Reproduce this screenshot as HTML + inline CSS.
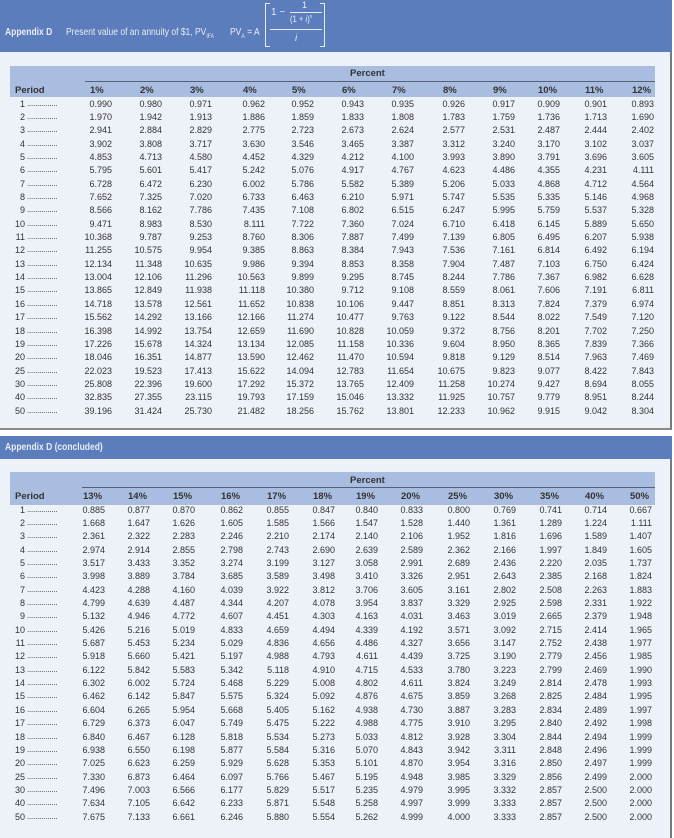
<!DOCTYPE html>
<html><head><meta charset="utf-8"><style>
*{margin:0;padding:0;box-sizing:border-box}
body{width:674px;height:838px;position:relative;background:#fff;font-family:"Liberation Sans",sans-serif;color:#333;overflow:hidden}
.abs{position:absolute}
.band{background:#5b7dbc}
.panel{background:#edf1f8;border-right:2px solid #7a7a7a}
.hb{background:#a9bde1}
table{position:absolute;left:0;border-collapse:collapse;table-layout:fixed;font-size:9px;line-height:10px}
tr{height:13.35px}
td,th{padding:0;text-align:right;white-space:nowrap;overflow:hidden;height:13.35px;vertical-align:middle}
th{font-weight:bold;font-size:9.5px;height:12px}
tr.h{height:12px}
th span{display:inline-block;width:22px;text-align:left}
th:first-child{text-align:left;padding-left:15px}
td:first-child{text-align:left}
td i{font-style:normal;display:inline-block;width:25px;text-align:right;margin-right:2px;vertical-align:top;height:10px}
.dots{font-size:8px;letter-spacing:-0.2px;vertical-align:top}
.wt{color:#e6ecf7;font-size:10px;white-space:nowrap}
</style></head><body>
<div class="abs band" style="left:0;top:0;width:672px;height:52px"></div>
<div class="abs panel" style="left:0;top:52px;width:672px;height:378px;border-bottom:2px solid #8a8a8a"></div>
<div class="abs wt" style="left:5px;top:27px;font-weight:bold;transform:scaleX(.85);transform-origin:left">Appendix D</div>
<div class="abs wt" style="left:66px;top:27px;transform:scaleX(.85);transform-origin:left">Present value of an annuity of $1, PV<sub style="font-size:6px">IFA</sub></div>
<div class="abs wt" style="left:230px;top:27px;transform:scaleX(.85);transform-origin:left">PV<sub style="font-size:6px">A</sub> = A</div>
<div class="abs" style="left:265px;top:3px;width:5px;height:44px;border:1.5px solid #e6ecf7;border-right:none"></div>
<div class="abs" style="left:320px;top:3px;width:5px;height:44px;border:1.5px solid #e6ecf7;border-left:none"></div>
<div class="abs wt" style="left:271px;top:7px">1 −</div>
<div class="abs wt" style="left:302px;top:0px;font-size:9px">1</div>
<div class="abs" style="left:290px;top:12px;width:32px;height:1px;background:#e6ecf7"></div>
<div class="abs wt" style="left:290px;top:14px;font-size:9px;transform:scaleX(.85);transform-origin:left">(1 + <i>i</i>)<sup style="font-size:5px">n</sup></div>
<div class="abs" style="left:270px;top:29px;width:52px;height:1px;background:#e6ecf7"></div>
<div class="abs wt" style="left:295px;top:33px;font-style:italic">i</div>

<div class="abs hb" style="left:10px;top:66px;width:645px;height:31px"></div>
<div class="abs" style="left:85px;top:81px;width:570px;height:1px;background:#55607a"></div>
<div class="abs" style="left:350px;top:68px;font-size:9.5px;font-weight:bold">Percent</div>

<table style="top:85px">
<colgroup><col style="width:62px"><col style="width:50px"><col style="width:50px"><col style="width:50px"><col style="width:53px"><col style="width:49px"><col style="width:50px"><col style="width:50px"><col style="width:51px"><col style="width:50px"><col style="width:45px"><col style="width:47px"><col style="width:47px"></colgroup>
<tr class="h"><th>Period</th><th><span>1%</span></th><th><span>2%</span></th><th><span>3%</span></th><th><span>4%</span></th><th><span>5%</span></th><th><span>6%</span></th><th><span>7%</span></th><th><span>8%</span></th><th><span>9%</span></th><th><span>10%</span></th><th><span>11%</span></th><th><span>12%</span></th></tr>
<tr><td><i>1</i><span class="dots">...............</span></td><td>0.990</td><td>0.980</td><td>0.971</td><td>0.962</td><td>0.952</td><td>0.943</td><td>0.935</td><td>0.926</td><td>0.917</td><td>0.909</td><td>0.901</td><td>0.893</td></tr>
<tr><td><i>2</i><span class="dots">...............</span></td><td>1.970</td><td>1.942</td><td>1.913</td><td>1.886</td><td>1.859</td><td>1.833</td><td>1.808</td><td>1.783</td><td>1.759</td><td>1.736</td><td>1.713</td><td>1.690</td></tr>
<tr><td><i>3</i><span class="dots">...............</span></td><td>2.941</td><td>2.884</td><td>2.829</td><td>2.775</td><td>2.723</td><td>2.673</td><td>2.624</td><td>2.577</td><td>2.531</td><td>2.487</td><td>2.444</td><td>2.402</td></tr>
<tr><td><i>4</i><span class="dots">...............</span></td><td>3.902</td><td>3.808</td><td>3.717</td><td>3.630</td><td>3.546</td><td>3.465</td><td>3.387</td><td>3.312</td><td>3.240</td><td>3.170</td><td>3.102</td><td>3.037</td></tr>
<tr><td><i>5</i><span class="dots">...............</span></td><td>4.853</td><td>4.713</td><td>4.580</td><td>4.452</td><td>4.329</td><td>4.212</td><td>4.100</td><td>3.993</td><td>3.890</td><td>3.791</td><td>3.696</td><td>3.605</td></tr>
<tr><td><i>6</i><span class="dots">...............</span></td><td>5.795</td><td>5.601</td><td>5.417</td><td>5.242</td><td>5.076</td><td>4.917</td><td>4.767</td><td>4.623</td><td>4.486</td><td>4.355</td><td>4.231</td><td>4.111</td></tr>
<tr><td><i>7</i><span class="dots">...............</span></td><td>6.728</td><td>6.472</td><td>6.230</td><td>6.002</td><td>5.786</td><td>5.582</td><td>5.389</td><td>5.206</td><td>5.033</td><td>4.868</td><td>4.712</td><td>4.564</td></tr>
<tr><td><i>8</i><span class="dots">...............</span></td><td>7.652</td><td>7.325</td><td>7.020</td><td>6.733</td><td>6.463</td><td>6.210</td><td>5.971</td><td>5.747</td><td>5.535</td><td>5.335</td><td>5.146</td><td>4.968</td></tr>
<tr><td><i>9</i><span class="dots">...............</span></td><td>8.566</td><td>8.162</td><td>7.786</td><td>7.435</td><td>7.108</td><td>6.802</td><td>6.515</td><td>6.247</td><td>5.995</td><td>5.759</td><td>5.537</td><td>5.328</td></tr>
<tr><td><i>10</i><span class="dots">...............</span></td><td>9.471</td><td>8.983</td><td>8.530</td><td>8.111</td><td>7.722</td><td>7.360</td><td>7.024</td><td>6.710</td><td>6.418</td><td>6.145</td><td>5.889</td><td>5.650</td></tr>
<tr><td><i>11</i><span class="dots">...............</span></td><td>10.368</td><td>9.787</td><td>9.253</td><td>8.760</td><td>8.306</td><td>7.887</td><td>7.499</td><td>7.139</td><td>6.805</td><td>6.495</td><td>6.207</td><td>5.938</td></tr>
<tr><td><i>12</i><span class="dots">...............</span></td><td>11.255</td><td>10.575</td><td>9.954</td><td>9.385</td><td>8.863</td><td>8.384</td><td>7.943</td><td>7.536</td><td>7.161</td><td>6.814</td><td>6.492</td><td>6.194</td></tr>
<tr><td><i>13</i><span class="dots">...............</span></td><td>12.134</td><td>11.348</td><td>10.635</td><td>9.986</td><td>9.394</td><td>8.853</td><td>8.358</td><td>7.904</td><td>7.487</td><td>7.103</td><td>6.750</td><td>6.424</td></tr>
<tr><td><i>14</i><span class="dots">...............</span></td><td>13.004</td><td>12.106</td><td>11.296</td><td>10.563</td><td>9.899</td><td>9.295</td><td>8.745</td><td>8.244</td><td>7.786</td><td>7.367</td><td>6.982</td><td>6.628</td></tr>
<tr><td><i>15</i><span class="dots">...............</span></td><td>13.865</td><td>12.849</td><td>11.938</td><td>11.118</td><td>10.380</td><td>9.712</td><td>9.108</td><td>8.559</td><td>8.061</td><td>7.606</td><td>7.191</td><td>6.811</td></tr>
<tr><td><i>16</i><span class="dots">...............</span></td><td>14.718</td><td>13.578</td><td>12.561</td><td>11.652</td><td>10.838</td><td>10.106</td><td>9.447</td><td>8.851</td><td>8.313</td><td>7.824</td><td>7.379</td><td>6.974</td></tr>
<tr><td><i>17</i><span class="dots">...............</span></td><td>15.562</td><td>14.292</td><td>13.166</td><td>12.166</td><td>11.274</td><td>10.477</td><td>9.763</td><td>9.122</td><td>8.544</td><td>8.022</td><td>7.549</td><td>7.120</td></tr>
<tr><td><i>18</i><span class="dots">...............</span></td><td>16.398</td><td>14.992</td><td>13.754</td><td>12.659</td><td>11.690</td><td>10.828</td><td>10.059</td><td>9.372</td><td>8.756</td><td>8.201</td><td>7.702</td><td>7.250</td></tr>
<tr><td><i>19</i><span class="dots">...............</span></td><td>17.226</td><td>15.678</td><td>14.324</td><td>13.134</td><td>12.085</td><td>11.158</td><td>10.336</td><td>9.604</td><td>8.950</td><td>8.365</td><td>7.839</td><td>7.366</td></tr>
<tr><td><i>20</i><span class="dots">...............</span></td><td>18.046</td><td>16.351</td><td>14.877</td><td>13.590</td><td>12.462</td><td>11.470</td><td>10.594</td><td>9.818</td><td>9.129</td><td>8.514</td><td>7.963</td><td>7.469</td></tr>
<tr><td><i>25</i><span class="dots">...............</span></td><td>22.023</td><td>19.523</td><td>17.413</td><td>15.622</td><td>14.094</td><td>12.783</td><td>11.654</td><td>10.675</td><td>9.823</td><td>9.077</td><td>8.422</td><td>7.843</td></tr>
<tr><td><i>30</i><span class="dots">...............</span></td><td>25.808</td><td>22.396</td><td>19.600</td><td>17.292</td><td>15.372</td><td>13.765</td><td>12.409</td><td>11.258</td><td>10.274</td><td>9.427</td><td>8.694</td><td>8.055</td></tr>
<tr><td><i>40</i><span class="dots">...............</span></td><td>32.835</td><td>27.355</td><td>23.115</td><td>19.793</td><td>17.159</td><td>15.046</td><td>13.332</td><td>11.925</td><td>10.757</td><td>9.779</td><td>8.951</td><td>8.244</td></tr>
<tr><td><i>50</i><span class="dots">...............</span></td><td>39.196</td><td>31.424</td><td>25.730</td><td>21.482</td><td>18.256</td><td>15.762</td><td>13.801</td><td>12.233</td><td>10.962</td><td>9.915</td><td>9.042</td><td>8.304</td></tr>
</table>

<div class="abs band" style="left:0;top:436px;width:672px;height:23px"></div>
<div class="abs wt" style="left:5px;top:442px;font-weight:bold;transform:scaleX(.85);transform-origin:left">Appendix D (concluded)</div>
<div class="abs panel" style="left:0;top:459px;width:672px;height:379px"></div>
<div class="abs hb" style="left:10px;top:472px;width:645px;height:33px"></div>
<div class="abs" style="left:82px;top:487px;width:573px;height:1px;background:#55607a"></div>
<div class="abs" style="left:350px;top:475px;font-size:9.5px;font-weight:bold">Percent</div>

<table style="top:491px">
<colgroup><col style="width:62px"><col style="width:43px"><col style="width:45px"><col style="width:45px"><col style="width:48px"><col style="width:46px"><col style="width:46px"><col style="width:43px"><col style="width:45px"><col style="width:47px"><col style="width:46px"><col style="width:46px"><col style="width:45px"><col style="width:45px"></colgroup>
<tr class="h"><th>Period</th><th><span>13%</span></th><th><span>14%</span></th><th><span>15%</span></th><th><span>16%</span></th><th><span>17%</span></th><th><span>18%</span></th><th><span>19%</span></th><th><span>20%</span></th><th><span>25%</span></th><th><span>30%</span></th><th><span>35%</span></th><th><span>40%</span></th><th><span>50%</span></th></tr>
<tr><td><i>1</i><span class="dots">...............</span></td><td>0.885</td><td>0.877</td><td>0.870</td><td>0.862</td><td>0.855</td><td>0.847</td><td>0.840</td><td>0.833</td><td>0.800</td><td>0.769</td><td>0.741</td><td>0.714</td><td>0.667</td></tr>
<tr><td><i>2</i><span class="dots">...............</span></td><td>1.668</td><td>1.647</td><td>1.626</td><td>1.605</td><td>1.585</td><td>1.566</td><td>1.547</td><td>1.528</td><td>1.440</td><td>1.361</td><td>1.289</td><td>1.224</td><td>1.111</td></tr>
<tr><td><i>3</i><span class="dots">...............</span></td><td>2.361</td><td>2.322</td><td>2.283</td><td>2.246</td><td>2.210</td><td>2.174</td><td>2.140</td><td>2.106</td><td>1.952</td><td>1.816</td><td>1.696</td><td>1.589</td><td>1.407</td></tr>
<tr><td><i>4</i><span class="dots">...............</span></td><td>2.974</td><td>2.914</td><td>2.855</td><td>2.798</td><td>2.743</td><td>2.690</td><td>2.639</td><td>2.589</td><td>2.362</td><td>2.166</td><td>1.997</td><td>1.849</td><td>1.605</td></tr>
<tr><td><i>5</i><span class="dots">...............</span></td><td>3.517</td><td>3.433</td><td>3.352</td><td>3.274</td><td>3.199</td><td>3.127</td><td>3.058</td><td>2.991</td><td>2.689</td><td>2.436</td><td>2.220</td><td>2.035</td><td>1.737</td></tr>
<tr><td><i>6</i><span class="dots">...............</span></td><td>3.998</td><td>3.889</td><td>3.784</td><td>3.685</td><td>3.589</td><td>3.498</td><td>3.410</td><td>3.326</td><td>2.951</td><td>2.643</td><td>2.385</td><td>2.168</td><td>1.824</td></tr>
<tr><td><i>7</i><span class="dots">...............</span></td><td>4.423</td><td>4.288</td><td>4.160</td><td>4.039</td><td>3.922</td><td>3.812</td><td>3.706</td><td>3.605</td><td>3.161</td><td>2.802</td><td>2.508</td><td>2.263</td><td>1.883</td></tr>
<tr><td><i>8</i><span class="dots">...............</span></td><td>4.799</td><td>4.639</td><td>4.487</td><td>4.344</td><td>4.207</td><td>4.078</td><td>3.954</td><td>3.837</td><td>3.329</td><td>2.925</td><td>2.598</td><td>2.331</td><td>1.922</td></tr>
<tr><td><i>9</i><span class="dots">...............</span></td><td>5.132</td><td>4.946</td><td>4.772</td><td>4.607</td><td>4.451</td><td>4.303</td><td>4.163</td><td>4.031</td><td>3.463</td><td>3.019</td><td>2.665</td><td>2.379</td><td>1.948</td></tr>
<tr><td><i>10</i><span class="dots">...............</span></td><td>5.426</td><td>5.216</td><td>5.019</td><td>4.833</td><td>4.659</td><td>4.494</td><td>4.339</td><td>4.192</td><td>3.571</td><td>3.092</td><td>2.715</td><td>2.414</td><td>1.965</td></tr>
<tr><td><i>11</i><span class="dots">...............</span></td><td>5.687</td><td>5.453</td><td>5.234</td><td>5.029</td><td>4.836</td><td>4.656</td><td>4.486</td><td>4.327</td><td>3.656</td><td>3.147</td><td>2.752</td><td>2.438</td><td>1.977</td></tr>
<tr><td><i>12</i><span class="dots">...............</span></td><td>5.918</td><td>5.660</td><td>5.421</td><td>5.197</td><td>4.988</td><td>4.793</td><td>4.611</td><td>4.439</td><td>3.725</td><td>3.190</td><td>2.779</td><td>2.456</td><td>1.985</td></tr>
<tr><td><i>13</i><span class="dots">...............</span></td><td>6.122</td><td>5.842</td><td>5.583</td><td>5.342</td><td>5.118</td><td>4.910</td><td>4.715</td><td>4.533</td><td>3.780</td><td>3.223</td><td>2.799</td><td>2.469</td><td>1.990</td></tr>
<tr><td><i>14</i><span class="dots">...............</span></td><td>6.302</td><td>6.002</td><td>5.724</td><td>5.468</td><td>5.229</td><td>5.008</td><td>4.802</td><td>4.611</td><td>3.824</td><td>3.249</td><td>2.814</td><td>2.478</td><td>1.993</td></tr>
<tr><td><i>15</i><span class="dots">...............</span></td><td>6.462</td><td>6.142</td><td>5.847</td><td>5.575</td><td>5.324</td><td>5.092</td><td>4.876</td><td>4.675</td><td>3.859</td><td>3.268</td><td>2.825</td><td>2.484</td><td>1.995</td></tr>
<tr><td><i>16</i><span class="dots">...............</span></td><td>6.604</td><td>6.265</td><td>5.954</td><td>5.668</td><td>5.405</td><td>5.162</td><td>4.938</td><td>4.730</td><td>3.887</td><td>3.283</td><td>2.834</td><td>2.489</td><td>1.997</td></tr>
<tr><td><i>17</i><span class="dots">...............</span></td><td>6.729</td><td>6.373</td><td>6.047</td><td>5.749</td><td>5.475</td><td>5.222</td><td>4.988</td><td>4.775</td><td>3.910</td><td>3.295</td><td>2.840</td><td>2.492</td><td>1.998</td></tr>
<tr><td><i>18</i><span class="dots">...............</span></td><td>6.840</td><td>6.467</td><td>6.128</td><td>5.818</td><td>5.534</td><td>5.273</td><td>5.033</td><td>4.812</td><td>3.928</td><td>3.304</td><td>2.844</td><td>2.494</td><td>1.999</td></tr>
<tr><td><i>19</i><span class="dots">...............</span></td><td>6.938</td><td>6.550</td><td>6.198</td><td>5.877</td><td>5.584</td><td>5.316</td><td>5.070</td><td>4.843</td><td>3.942</td><td>3.311</td><td>2.848</td><td>2.496</td><td>1.999</td></tr>
<tr><td><i>20</i><span class="dots">...............</span></td><td>7.025</td><td>6.623</td><td>6.259</td><td>5.929</td><td>5.628</td><td>5.353</td><td>5.101</td><td>4.870</td><td>3.954</td><td>3.316</td><td>2.850</td><td>2.497</td><td>1.999</td></tr>
<tr><td><i>25</i><span class="dots">...............</span></td><td>7.330</td><td>6.873</td><td>6.464</td><td>6.097</td><td>5.766</td><td>5.467</td><td>5.195</td><td>4.948</td><td>3.985</td><td>3.329</td><td>2.856</td><td>2.499</td><td>2.000</td></tr>
<tr><td><i>30</i><span class="dots">...............</span></td><td>7.496</td><td>7.003</td><td>6.566</td><td>6.177</td><td>5.829</td><td>5.517</td><td>5.235</td><td>4.979</td><td>3.995</td><td>3.332</td><td>2.857</td><td>2.500</td><td>2.000</td></tr>
<tr><td><i>40</i><span class="dots">...............</span></td><td>7.634</td><td>7.105</td><td>6.642</td><td>6.233</td><td>5.871</td><td>5.548</td><td>5.258</td><td>4.997</td><td>3.999</td><td>3.333</td><td>2.857</td><td>2.500</td><td>2.000</td></tr>
<tr><td><i>50</i><span class="dots">...............</span></td><td>7.675</td><td>7.133</td><td>6.661</td><td>6.246</td><td>5.880</td><td>5.554</td><td>5.262</td><td>4.999</td><td>4.000</td><td>3.333</td><td>2.857</td><td>2.500</td><td>2.000</td></tr>
</table>
</body></html>
